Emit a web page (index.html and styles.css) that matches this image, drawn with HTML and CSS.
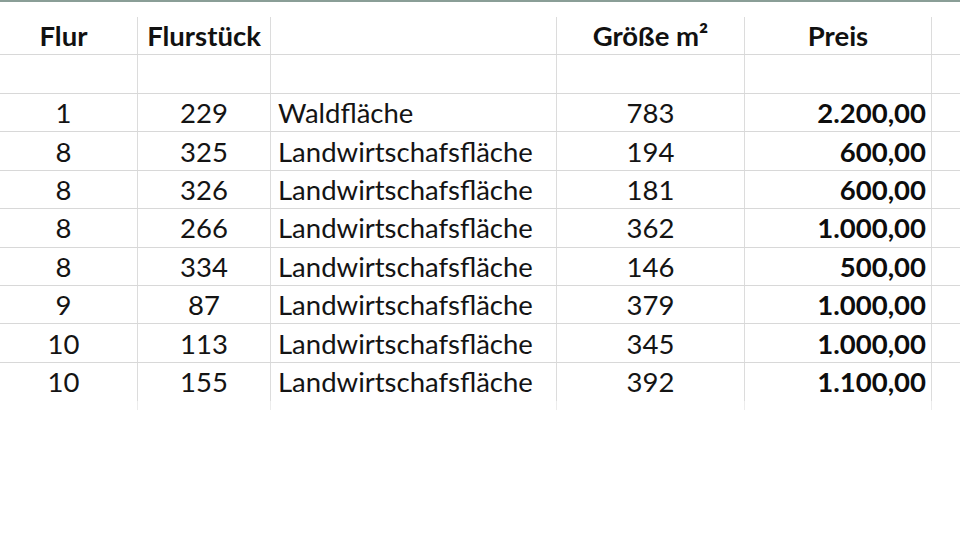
FILE: index.html
```html
<!DOCTYPE html>
<html lang="de">
<head>
<meta charset="utf-8">
<link rel="stylesheet" href="styles.css">
</head>
<body>
<div class="topbar"></div>
<div class="sheet">
  <div class="row spacer"><div class="c"></div><div class="c"></div><div class="c"></div><div class="c"></div><div class="c"></div><div class="c last"></div></div>
  <div class="row head">
    <div class="c first">Flur</div>
    <div class="c mid">Flurstück</div>
    <div class="c"></div>
    <div class="c mid">Größe m²</div>
    <div class="c mid">Preis</div>
    <div class="c last"></div>
  </div>
  <div class="row empty"><div class="c"></div><div class="c"></div><div class="c"></div><div class="c"></div><div class="c"></div><div class="c last"></div></div>
  <div class="row data"><div class="c first">1</div><div class="c mid">229</div><div class="c txt">Waldfläche</div><div class="c mid">783</div><div class="c price">2.200,00</div><div class="c last"></div></div>
  <div class="row data"><div class="c first">8</div><div class="c mid">325</div><div class="c txt">Landwirtschafsfläche</div><div class="c mid">194</div><div class="c price">600,00</div><div class="c last"></div></div>
  <div class="row data"><div class="c first">8</div><div class="c mid">326</div><div class="c txt">Landwirtschafsfläche</div><div class="c mid">181</div><div class="c price">600,00</div><div class="c last"></div></div>
  <div class="row data"><div class="c first">8</div><div class="c mid">266</div><div class="c txt">Landwirtschafsfläche</div><div class="c mid">362</div><div class="c price">1.000,00</div><div class="c last"></div></div>
  <div class="row data"><div class="c first">8</div><div class="c mid">334</div><div class="c txt">Landwirtschafsfläche</div><div class="c mid">146</div><div class="c price">500,00</div><div class="c last"></div></div>
  <div class="row data"><div class="c first">9</div><div class="c mid">87</div><div class="c txt">Landwirtschafsfläche</div><div class="c mid">379</div><div class="c price">1.000,00</div><div class="c last"></div></div>
  <div class="row data"><div class="c first">10</div><div class="c mid">113</div><div class="c txt">Landwirtschafsfläche</div><div class="c mid">345</div><div class="c price">1.000,00</div><div class="c last"></div></div>
  <div class="row data final"><div class="c first">10</div><div class="c mid">155</div><div class="c txt">Landwirtschafsfläche</div><div class="c mid">392</div><div class="c price">1.100,00</div><div class="c last"></div></div>
  <div class="row tail"><div class="c"></div><div class="c"></div><div class="c"></div><div class="c"></div><div class="c"></div><div class="c last"></div></div>
</div>
</body>
</html>
```
FILE: styles.css
```css
html, body {
  margin: 0;
  padding: 0;
  background: #ffffff;
}
body {
  width: 960px;
  height: 540px;
  overflow: hidden;
  font-family: Lato, "Open Sans", "DejaVu Sans", sans-serif;
  color: #141414;
}
.topbar {
  height: 2px;
  background: #8a9e97;
}
.sheet {
  display: flex;
  flex-direction: column;
}
.row {
  display: grid;
  grid-template-columns: 138px 133px 286px 188px 187px 28px;
  box-sizing: border-box;
}
.c {
  box-sizing: border-box;
  border-right: 1px solid #dcdcdc;
  display: flex;
  align-items: center;
  white-space: nowrap;
  overflow: hidden;
}
.c.last {
  border-right: none;
}
.spacer {
  height: 15px;
}
.spacer .c {
  border-right-color: transparent;
}
.head {
  height: 38px;
  border-bottom: 1px solid #d8d8d8;
  font-weight: 700;
  font-size: 27.5px;
  color: #111;
}
.empty {
  height: 39px;
  border-bottom: 1px solid #d8d8d8;
}
.data {
  height: 38.4px;
  border-bottom: 1px solid #d8d8d8;
  font-size: 27.5px;
}
.data.final {
  border-bottom: none;
}
.tail {
  height: 9px;
}
.tail .c {
  border-right-color: #ececec;
}
.first {
  justify-content: center;
  padding-right: 10px;
}
.mid {
  justify-content: center;
}
.txt {
  padding-left: 7px;
}
.price {
  justify-content: flex-end;
  padding-right: 5px;
  font-weight: 700;
  color: #0d0d0d;
}
```
